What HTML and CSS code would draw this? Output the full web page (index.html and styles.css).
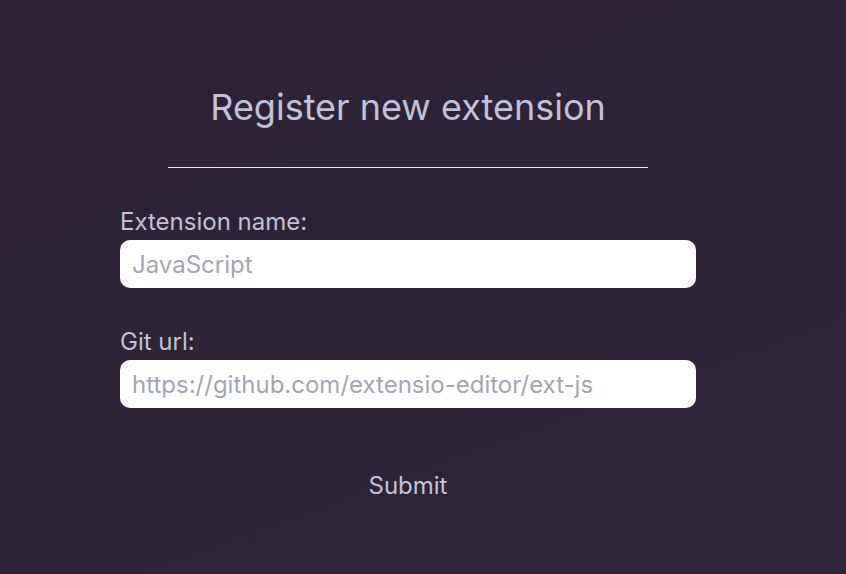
FILE: index.html
```html
<!DOCTYPE html>
<html>
<head>
<meta charset="utf-8">
<link rel="stylesheet" href="styles.css">
</head>
<body>
<main class="form-wrap">
  <h1 class="title">Register new extension</h1>
  <hr class="divider">
  <form class="form">
    <label class="field">
      <span class="label">Extension name:</span>
      <input class="input" type="text" placeholder="JavaScript">
    </label>
    <label class="field">
      <span class="label">Git url:</span>
      <input class="input" type="text" placeholder="https://github.com/extensio-editor/ext-js">
    </label>
    <button class="submit" type="button">Submit</button>
  </form>
</main>
</body>
</html>
```
FILE: styles.css
```css
html, body {
  margin: 0;
  height: 100%;
}
body {
  background: linear-gradient(160deg, #2e2235 0%, #2d2738 100%);
  font-family: Inter, "Noto Sans", sans-serif;
  color: #c2c2d6;
}
.form-wrap {
  width: 576px;
  margin-left: 120px;
  padding-top: 85px;
  display: flex;
  flex-direction: column;
  align-items: center;
}
.title {
  margin: 0;
  font-size: 36px;
  font-weight: 400;
  line-height: 44px;
}
.divider {
  width: 480px;
  border: 0;
  border-top: 1px solid #e8e6f0;
  margin: 38px 0 0;
}
.form {
  width: 100%;
  display: flex;
  flex-direction: column;
  margin-top: 39px;
}
.field {
  display: flex;
  flex-direction: column;
  gap: 4px;
  margin-bottom: 39px;
}
.label {
  font-size: 24px;
  line-height: 29px;
}
.input {
  box-sizing: border-box;
  height: 48px;
  border: 0;
  border-radius: 10px;
  background: #ffffff;
  padding: 0 12px;
  font-family: Inter, "Noto Sans", sans-serif;
  font-size: 24px;
  color: #333;
  outline: none;
}
.input::placeholder {
  color: #a2a4b8;
}
.submit {
  align-self: center;
  background: none;
  border: 0;
  font-family: Inter, "Noto Sans", sans-serif;
  font-size: 24px;
  color: #c2c2d6;
  padding: 0;
  margin-top: 24px;
  line-height: 29px;
}
```
